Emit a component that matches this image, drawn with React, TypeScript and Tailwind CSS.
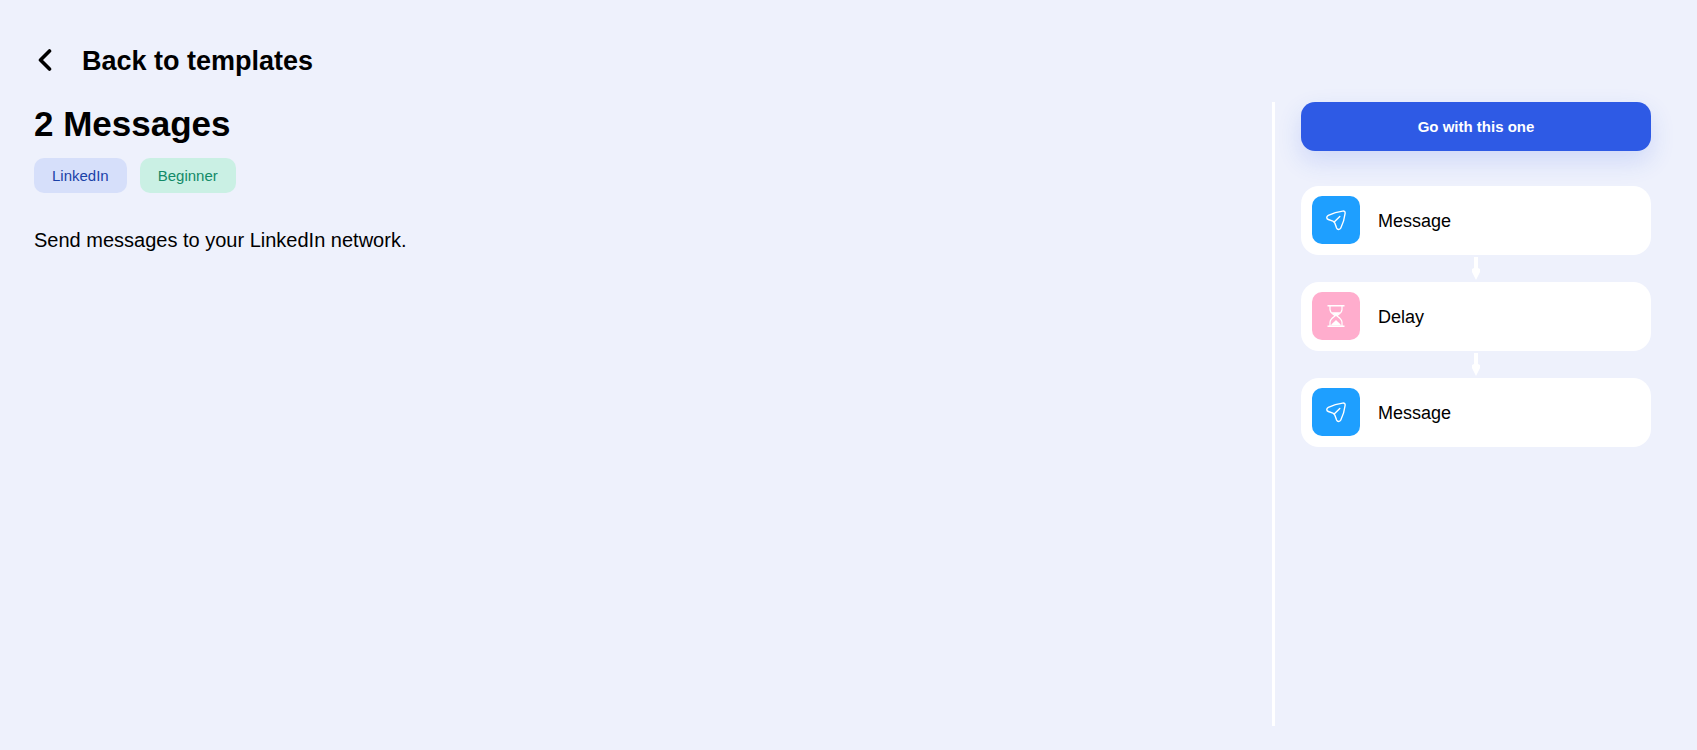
import React from 'react';

const PlaneIcon = () => (
  <svg width="22" height="22" viewBox="0 0 22 22" fill="none" stroke="white" strokeWidth="1.4" strokeLinecap="round" strokeLinejoin="round">
    <path d="M3.3 6.3C7.500 4.300 12.500 2.700 17.700 2.100 19.500 1.900 20.300 2.800 20.100 4.500 19.500 9.500 18 14.500 15.800 19 14.900 20.900 12.400 20.900 11.600 19L9.900 14.300C9.500 13.200 8.900 12.600 7.900 12.200L3.300 10.500C1.200 9.700 1.300 7.300 3.300 6.300Z" />
    <path d="M9.200 12.900 14.800 7.400" />
  </svg>
);

const HourglassIcon = () => (
  <svg width="18" height="22" viewBox="0 0 18 22" fill="none" stroke="white" strokeWidth="1.2">
    <path d="M.5.8h17M.5 21.200h17" strokeWidth="1.400" />
    <path d="M3 1v3.500C3 8 6 9 8.300 10.800 6 12.500 3 14 3 17.500V21M15 1v3.500C15 8 12 9 9.700 10.800c2.300 1.700 5.300 3.200 5.300 6.700V21" />
    <path d="M4.500 7.300h9L9 11.200ZM3.800 20.500C5 18 7 17.500 9 15c2 2.500 4 3 5.200 5.500Z" fill="white" stroke="none" />
  </svg>
);

const ArrowDown = () => (
  <svg className="mx-auto" width="8" height="23" viewBox="0 0 8 23" fill="white">
    <path d="M2 0h4v11l2 1v3L4 23 0 15v-3l2-1Z" />
  </svg>
);

const steps = [
  { name: 'Message', color: 'bg-[#1e9fff]', icon: <PlaneIcon /> },
  { name: 'Delay', color: 'bg-[#ffadcd]', icon: <HourglassIcon /> },
  { name: 'Message', color: 'bg-[#1e9fff]', icon: <PlaneIcon /> },
];

const App = () => {
  return (
    <div className="flex min-h-screen flex-col bg-[#eef1fc] pt-10 pr-[46px] pb-6 pl-[34px] font-['Liberation_Sans',Arial,sans-serif] text-black">
      <header className="flex h-[62px] items-start">
        <a href="#" className="flex h-10 items-center gap-[30px]">
          <svg width="18" height="24" viewBox="0 0 18 24" fill="none" stroke="currentColor" strokeWidth="3.600" strokeLinecap="round" strokeLinejoin="round">
            <path d="M15.500 3 6.500 12 15.500 21" />
          </svg>
          <span className="pt-0.5 text-[27px] font-bold">Back to templates</span>
        </a>
      </header>

      <main className="flex flex-1">
        {/* Template details */}
        <section className="flex-1">
          <h1 className="text-[35px] leading-11 font-bold">2 Messages</h1>
          <div className="mt-3 flex gap-[13px] text-[15px]">
            <span className="flex h-[35px] items-center rounded-[10px] bg-[#d6dffa] px-[18px] pt-0.5 text-[#1a41a8]">LinkedIn</span>
            <span className="flex h-[35px] items-center rounded-[10px] bg-[#caf0e4] px-[18px] pt-0.5 text-[#138a68]">Beginner</span>
          </div>
          <p className="mt-[33px] text-xl">Send messages to your LinkedIn network.</p>
        </section>

        {/* Steps */}
        <aside className="border-l-3 border-white pl-[26px]">
          <button className="h-[49px] w-[350px] rounded-[14px] bg-[#2e5ae5] pt-0.5 text-[15px] font-bold text-white shadow-[0_10px_25px_rgba(46,90,229,0.16)]">
            Go with this one
          </button>
          <ul className="mt-[35px]">
            {steps.map((step, i) => (
              <li key={i}>
                {i > 0 && (
                  <div className="h-[27px] pt-0.5">
                    <ArrowDown />
                  </div>
                )}
                <div className="flex h-[69px] items-start gap-[18px] rounded-[18px] bg-white px-[11px] pt-2.5">
                  <div className={`flex size-12 items-center justify-center rounded-[10px] ${step.color}`}>{step.icon}</div>
                  <span className="text-lg leading-[50px]">{step.name}</span>
                </div>
              </li>
            ))}
          </ul>
        </aside>
      </main>
    </div>
  );
};

export default App;
